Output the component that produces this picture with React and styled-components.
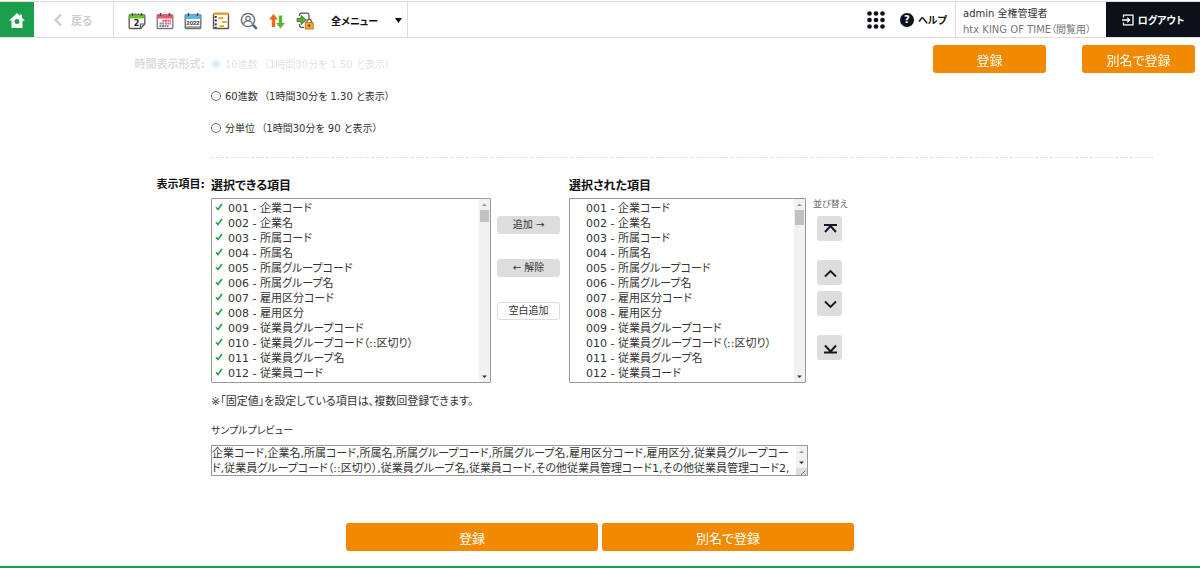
import React, { useState } from 'react';
import styled, { createGlobalStyle } from 'styled-components';

const baseItems = [
  '企業コード',
  '企業名',
  '所属コード',
  '所属名',
  '所属グループコード',
  '所属グループ名',
  '雇用区分コード',
  '雇用区分',
  '従業員グループコード',
  '従業員グループコード（::区切り）',
  '従業員グループ名',
  '従業員コード',
  'その他従業員管理コード1',
  'その他従業員管理コード2',
  '名前',
  '名前（フリガナ）',
];

const buildItems = (total) => Array.from({ length: total }, (_, i) => {
  const code = String(i + 1).padStart(3, '0');
  const name = baseItems[i] || `固定値${i + 1 - baseItems.length}`;
  return { code, label: `${code} - ${name}` };
});

const availableItems = buildItems(165);
const selectedItems = buildItems(132);

const formats = [
  { id: 'decimal', label: '10進数  （1時間30分を 1.50 と表示）', faded: true },
  { id: 'sexagesimal', label: '60進数  （1時間30分を 1.30 と表示）' },
  { id: 'minutes', label: '分単位  （1時間30分を 90 と表示）' },
];

const DayIcon = () => (
  <svg width="18" height="18" viewBox="0 0 18 18" fill="none">
    <path d="M2 3h14a.8.8 0 01.8.8V12l-4.300 4.500H2a.8.8 0 01-.8-.8V3.800A.8.8 0 012 3z" fill="#fff" stroke="#555" strokeWidth="1.300" />
    <path d="M1.500 3h15v3.500h-15z" fill="#6cc21e" />
    <path d="M4.500 1v3M13.500 1v3M7.500 1.500v1M10.500 1.500v1" stroke="#444" strokeWidth="1.400" />
    <path d="M16.500 12h-4v4.500" stroke="#555" strokeWidth="1.200" />
    <text x="8.500" y="14.300" textAnchor="middle" fontSize="8" fontWeight="700" fontFamily="DejaVu Sans, sans-serif" fill="#222">2</text>
  </svg>
);

const MonthIcon = () => (
  <svg width="18" height="18" viewBox="0 0 18 18" fill="none">
    <rect x="1.200" y="3" width="15.600" height="13.500" rx=".8" fill="#fff" stroke="#777" strokeWidth="1.300" />
    <path d="M1.500 2.500h15v4h-15z" fill="#f2536b" />
    <path d="M4.500 1v3M13.500 1v3" stroke="#444" strokeWidth="1.400" />
    <path d="M6.500 8.800h8.500M9 11.400h6" stroke="#f2536b" strokeWidth="2" strokeDasharray="2 .5" />
    <path d="M3.500 11.400H8M3.500 14h9" stroke="#888" strokeWidth="2" strokeDasharray="2 .5" />
  </svg>
);

const YearIcon = () => (
  <svg width="18" height="18" viewBox="0 0 18 18" fill="none">
    <rect x="1.200" y="3" width="15.600" height="13.500" rx=".8" fill="#fff" stroke="#666" strokeWidth="1.300" />
    <path d="M1.500 2.500h15v4.500h-15z" fill="#5bb4e5" />
    <path d="M4.500 1v3M13.500 1v3" stroke="#444" strokeWidth="1.400" />
    <path d="M2 15.200h14" stroke="#999" strokeWidth="2" />
    <text x="9" y="12.600" textAnchor="middle" fontSize="6" fontWeight="700" fontFamily="Liberation Sans, sans-serif" fill="#333">2022</text>
  </svg>
);

const ScheduleIcon = () => (
  <svg width="18" height="18" viewBox="0 0 18 18" fill="none">
    <rect x="1.500" y="1.500" width="15" height="15" rx=".8" fill="#fff" stroke="#555" strokeWidth="1.400" />
    <path d="M1 1.800h16" stroke="#f39a1b" strokeWidth="1.800" />
    <path d="M3.700 4v12" stroke="#333" strokeWidth="2" strokeDasharray="2 1.600" />
    <path d="M6.500 6h4.500M10 10h5M7.500 14h4.500" stroke="#f7a51d" strokeWidth="2.200" />
  </svg>
);

const SearchUserIcon = () => (
  <svg width="18" height="18" viewBox="0 0 18 18" fill="none">
    <circle cx="8" cy="8" r="6.600" fill="#fff" stroke="#777" strokeWidth="1.500" />
    <circle cx="8" cy="6.600" r="2.200" stroke="#777" strokeWidth="1.300" />
    <path d="M3.800 12c.5-2.400 2-3.200 4.200-3.200s3.700.8 4.200 3.200" stroke="#777" strokeWidth="1.300" />
    <path d="M12.800 12.800l4 4" stroke="#3f6f8f" strokeWidth="2.600" />
  </svg>
);

const SwapIcon = () => (
  <svg width="18" height="18" viewBox="0 0 18 18">
    <path d="M5.500 2L10 7.500H7.200V15H3.800V7.500H1z" fill="#f36a10" />
    <path d="M12.500 16.500L8 11h2.800V3.500h3.400V11H17z" fill="#5cb531" />
  </svg>
);

const LockIcon = () => (
  <svg width="18" height="18" viewBox="0 0 18 18" fill="none">
    <path d="M3.500 4V3a1.800 1.800 0 011.800-1.800h6A1.800 1.800 0 0113 3v4M3.500 12v1.500a1.800 1.800 0 001.800 1.800H8" stroke="#555" strokeWidth="1.300" />
    <path d="M1 6.500h4V3.500L10.500 8 5 12.500v-3H1z" fill="#58b22a" stroke="#3b6b26" strokeWidth=".8" />
    <path d="M11 11V9.500a2.200 2.200 0 014.400 0V11" stroke="#666" strokeWidth="1.300" />
    <rect x="9.200" y="10.600" width="8" height="6.400" fill="#f5a623" stroke="#a8711a" strokeWidth=".8" />
    <circle cx="13.200" cy="13.600" r="1.100" fill="#333" />
  </svg>
);

const tools = [
  { name: '日別データ', Icon: DayIcon },
  { name: '月別データ', Icon: MonthIcon },
  { name: '年別データ', Icon: YearIcon },
  { name: 'スケジュール', Icon: ScheduleIcon },
  { name: '従業員検索', Icon: SearchUserIcon },
  { name: 'データ入出力', Icon: SwapIcon },
  { name: 'ロック', Icon: LockIcon },
];

const sortButtons = [
  { name: '一番上へ', path: 'M7 9h13M8 16l5.500-6 5.500 6', gap: 0 },
  { name: '上へ', path: 'M8 16.500l5.500-5.500 5.500 5.500', gap: 19 },
  { name: '下へ', path: 'M8 10.500l5.500 5.500 5.500-5.500', gap: 6 },
  { name: '一番下へ', path: 'M7 17.500h13M8 10.500l5.500 6 5.500-6', gap: 19 },
];

const ScrollBar = ({ thumb }) => (
  <Track aria-hidden="true">
    <svg width="11" height="11" viewBox="0 0 11 11"><path d="M3 7h5L5.500 4.500z" fill="#999" /></svg>
    {thumb > 0 && <Thumb $size={thumb} />}
    <TrackEnd width="11" height="11" viewBox="0 0 11 11"><path d="M3 4.500h5L5.500 7z" fill="#333" /></TrackEnd>
  </Track>
);

const App = () => {
  const [format, setFormat] = useState('decimal');
  const [preview, setPreview] = useState(baseItems.join(','));

  return (
    <Page>
      <GlobalStyle />
      <Header>
        <HomeLink href="#home" aria-label="ホーム">
          <svg width="18" height="18" viewBox="0 0 18 18">
            <path d="M9 1L1 8.500h2.500V16h11V8.500H17L14 5.700V2.500h-2v1.300z" fill="#fff" />
            <circle cx="9" cy="9.500" r="2.500" fill="#1c9f4b" />
          </svg>
        </HomeLink>
        <BackButton type="button" disabled>
          <svg width="10" height="14" viewBox="0 0 10 14" fill="none">
            <path d="M8 1.500L2.500 7 8 12.500" stroke="#ccc" strokeWidth="2.400" />
          </svg>
          戻る
        </BackButton>
        <Toolbar>
          {tools.map(({ name, Icon }) => (
            <ToolButton key={name} type="button" aria-label={name}>
              <Icon />
            </ToolButton>
          ))}
          <MenuButton type="button">
            全メニュー
            <svg width="7" height="5" viewBox="0 0 7 5"><path d="M0 0h7L3.500 5z" fill="#111" /></svg>
          </MenuButton>
        </Toolbar>
        <HeaderRight>
          <ToolButton type="button" aria-label="アプリ一覧">
            <svg width="18" height="18" viewBox="0 0 18 18" fill="#0b1019">
              {[2.5, 9, 15.5].map((y) => [2.5, 9, 15.5].map((x) => (
                <circle key={`${x}-${y}`} cx={x} cy={y} r="2.300" />
              )))}
            </svg>
          </ToolButton>
          <HelpLink href="#help">
            <HelpMark>?</HelpMark>
            ヘルプ
          </HelpLink>
          <Account>
            <div>admin 全権管理者</div>
            <Company>htx KING OF TIME（閲覧用）</Company>
          </Account>
          <LogoutButton type="button">
            <svg width="12" height="12" viewBox="0 0 12 12" fill="none" stroke="#fff" strokeWidth="1.300">
              <path d="M1.500 3.500V1.200h9.500v9.600H1.500V8.500M0 6h7.500M5.200 3.600L7.600 6 5.200 8.400" />
            </svg>
            ログアウト
          </LogoutButton>
        </HeaderRight>
      </Header>

      <FloatingActions>
        <PrimaryButton type="button">登録</PrimaryButton>
        <PrimaryButton type="button">別名で登録</PrimaryButton>
      </FloatingActions>

      <Form>
        <FieldLabel $faded>時間表示形式:</FieldLabel>
        <FormatList>
          {formats.map(({ id, label, faded }) => (
            <RadioLabel key={id} $faded={faded}>
              <Radio
                type="radio"
                name="format"
                checked={format === id}
                onChange={() => setFormat(id)}
              />
              {label}
            </RadioLabel>
          ))}
        </FormatList>

        <FieldLabel>表示項目:</FieldLabel>
        <Picker>
          <PickerRow>
            <Available>
              <ListTitle htmlFor="available">選択できる項目</ListTitle>
              <ListFrame>
                <ListBox id="available" multiple size={12}>
                  {availableItems.map(({ code, label }) => (
                    <Item key={code} $checked>{label}</Item>
                  ))}
                </ListBox>
                <ScrollBar thumb={12} />
              </ListFrame>
            </Available>
            <MoveButtons>
              <MoveButton type="button">追加 →</MoveButton>
              <MoveButton type="button">← 解除</MoveButton>
              <MoveButton type="button" $plain>空白追加</MoveButton>
            </MoveButtons>
            <Selected>
              <ListTitle htmlFor="selected">選択された項目</ListTitle>
              <ListFrame>
                <ListBox id="selected" multiple size={12}>
                  {selectedItems.map(({ code, label }) => (
                    <Item key={code}>{label}</Item>
                  ))}
                </ListBox>
                <ScrollBar thumb={15} />
              </ListFrame>
            </Selected>
            <SortColumn>
              <SortTitle>並び替え</SortTitle>
              {sortButtons.map(({ name, path, gap }) => (
                <SortButton key={name} type="button" aria-label={name} $gap={gap}>
                  <svg width="25" height="25" viewBox="0 0 25 25" fill="none">
                    <path d={path} stroke="#111827" strokeWidth="1.900" />
                  </svg>
                </SortButton>
              ))}
            </SortColumn>
          </PickerRow>
          <Note>※「固定値」を設定している項目は、複数回登録できます。</Note>
          <PreviewLabel htmlFor="preview">サンプルプレビュー</PreviewLabel>
          <PreviewFrame>
            <Preview
              id="preview"
              rows={2}
              value={preview}
              onChange={(e) => setPreview(e.target.value)}
            />
            <PreviewSide>
              <ScrollBar />
              <Grip width="11" height="11" viewBox="0 0 11 11" aria-hidden="true">
                <path d="M2.500 9.500l7-7M6.500 9.500l3-3" stroke="#777" />
              </Grip>
            </PreviewSide>
          </PreviewFrame>
        </Picker>
      </Form>

      <BottomActions>
        <PrimaryButton type="button" $wide>登録</PrimaryButton>
        <PrimaryButton type="button" $wide>別名で登録</PrimaryButton>
      </BottomActions>
    </Page>
  );
};

const GlobalStyle = createGlobalStyle`
  * {
    box-sizing: border-box;
  }

  body {
    margin: 0;
    background: #fff;
  }

  body, button, select, textarea {
    font-family: "DejaVu Sans", "Noto Sans CJK JP", sans-serif;
    font-feature-settings: "palt";
    color: #333;
  }

  button {
    padding: 0;
    border: 0;
    background: none;
    cursor: pointer;
  }

  svg {
    display: block;
    flex: none;
  }
`;

const check = 'url("data:image/svg+xml,%3Csvg xmlns=\'http://www.w3.org/2000/svg\' width=\'8\' height=\'8\' viewBox=\'0 0 8 8\'%3E%3Cpath d=\'M1 4.300L3 6.500 7 1\' fill=\'none\' stroke=\'%2322a24c\' stroke-width=\'1.700\'/%3E%3C/svg%3E")';

const Page = styled.div`
  display: flex;
  flex-direction: column;
  min-height: 100vh;
  border-bottom: 2px solid #1c9f4b;
`;

const Header = styled.header`
  display: flex;
  height: 37px;
  margin-top: 1px;
  border: solid #ddd;
  border-width: 1px 0;
`;

const HomeLink = styled.a`
  display: flex;
  align-items: center;
  justify-content: center;
  width: 34px;
  padding-top: 2px;
  background: #1c9f4b;
`;

const BackButton = styled.button`
  display: flex;
  align-items: center;
  gap: 8px;
  width: 80px;
  padding-left: 19px;
  border-right: 1px solid #ddd;
  font-size: 11px;
  font-weight: 700;
  color: #ccc;
`;

const Toolbar = styled.nav`
  display: flex;
  align-items: center;
  gap: 10px;
  padding: 2px 5px 0 14px;
  border-right: 1px solid #ddd;
`;

const ToolButton = styled.button`
  width: 18px;
  height: 18px;
`;

const MenuButton = styled.button`
  display: flex;
  align-items: center;
  justify-content: space-between;
  width: 71px;
  margin-left: 7px;
  font-size: 10px;
  font-weight: 700;
  color: #111;
`;

const HeaderRight = styled.div`
  display: flex;
  align-items: center;
  margin-left: auto;
`;

const HelpLink = styled.a`
  display: flex;
  align-items: center;
  gap: 4px;
  width: 70px;
  padding-left: 15px;
  font-size: 10px;
  font-weight: 700;
  color: #111;
  text-decoration: none;
`;

const HelpMark = styled.span`
  width: 14px;
  border-radius: 50%;
  background: #0b1019;
  color: #fff;
  line-height: 14px;
  text-align: center;
`;

const Account = styled.div`
  width: 151px;
  padding: 4px 0 0 7px;
  border-left: 1px solid #ddd;
  font-size: 10px;
  line-height: 16px;
  white-space: nowrap;
`;

const Company = styled.div`
  color: #777;
`;

const LogoutButton = styled.button`
  display: flex;
  align-items: center;
  justify-content: center;
  gap: 4px;
  width: 94px;
  height: 35px;
  background: #0b1019;
  font-size: 10px;
  font-weight: 700;
  color: #fff;
`;

const PrimaryButton = styled.button`
  width: ${({ $wide }) => ($wide ? '252px' : '113px')};
  height: 28px;
  border-radius: 3px;
  background: #f28a00;
  font-size: 13px;
  color: #fff;
`;

const FloatingActions = styled.div`
  position: fixed;
  top: 45px;
  right: 5px;
  display: flex;
  gap: 36px;
`;

const Form = styled.form`
  display: grid;
  grid-template-columns: 158px 1fr;
  column-gap: 6px;
  margin: 0 47px;
`;

const FieldLabel = styled.div`
  padding-top: 18px;
  font-size: 11px;
  font-weight: 700;
  line-height: 18px;
  text-align: right;
  color: #111;
  opacity: ${({ $faded }) => ($faded ? 0.15 : 1)};
`;

const FormatList = styled.div`
  display: flex;
  flex-direction: column;
  gap: 14px;
  padding: 18px 0 19px;
  border-bottom: 1px dashed #ddd;
`;

const RadioLabel = styled.label`
  display: flex;
  align-items: center;
  gap: 4px;
  font-size: 10px;
  line-height: 18px;
  white-space: pre;
  opacity: ${({ $faded }) => ($faded ? 0.15 : 1)};
`;

const Radio = styled.input`
  width: 10px;
  height: 10px;
  margin: 0 0 3px;
`;

const Picker = styled.div`
  padding-top: 19px;
`;

const PickerRow = styled.div`
  display: flex;
`;

const Available = styled.div`
  width: 280px;
`;

const Selected = styled.div`
  width: 237px;
`;

const ListTitle = styled.label`
  display: block;
  height: 21px;
  font-size: 12px;
  font-weight: 700;
  line-height: 18px;
  color: #111;
`;

const ListFrame = styled.div`
  display: flex;
  height: 185px;
  border: 1px solid #999;
  border-radius: 1px;
`;

const ListBox = styled.select`
  flex: 1;
  min-width: 0;
  height: 100%;
  padding: 0;
  border: 0;
  font-size: 11px;
  outline: none;
  scrollbar-width: none;
`;

const Item = styled.option`
  height: 15px;
  min-height: 15px;
  padding: 0 0 0 16px;
  line-height: 15px;
  background: ${({ $checked }) => ($checked ? `${check} 3px center no-repeat` : 'none')};
`;

const Track = styled.div`
  display: flex;
  flex-direction: column;
  flex: 0 1 auto;
  width: 11px;
  background: #f1f1f1;
`;

const Thumb = styled.div`
  height: ${({ $size }) => $size}px;
  margin: 0 1px;
  background: #c1c1c1;
`;

const TrackEnd = styled.svg`
  margin-top: auto;
`;

const MoveButtons = styled.div`
  display: flex;
  flex-direction: column;
  gap: 25px;
  padding: 39px 9px 0 6px;
`;

const MoveButton = styled.button`
  width: 63px;
  height: 18px;
  border: 1px solid #ddd;
  border-radius: 3px;
  background: ${({ $plain }) => ($plain ? '#fff' : '#ddd')};
  font-size: 10px;
  line-height: 16px;
`;

const SortColumn = styled.div`
  display: flex;
  flex-direction: column;
  align-items: flex-start;
  padding: 19px 0 0 7px;
`;

const SortTitle = styled.div`
  height: 20px;
  font-size: 9px;
  line-height: 16px;
  color: #666;
`;

const SortButton = styled.button`
  width: 25px;
  height: 25px;
  margin: ${({ $gap }) => $gap}px 0 0 4px;
  border-radius: 3px;
  background: #ddd;
`;

const Note = styled.p`
  margin: 11px 0 0;
  font-size: 11px;
  line-height: 16px;
`;

const PreviewLabel = styled.label`
  display: block;
  margin: 13px 0 6px;
  font-size: 10px;
  line-height: 16px;
`;

const PreviewFrame = styled.div`
  display: flex;
  max-width: 597px;
  height: 31px;
  border: 1px solid #999;
`;

const Preview = styled.textarea`
  flex: 1;
  min-width: 0;
  padding: 0;
  border: 0;
  font-size: 11px;
  line-height: 15px;
  outline: none;
  resize: none;
  scrollbar-width: none;
`;

const PreviewSide = styled.div`
  display: flex;
  flex-direction: column;
  justify-content: space-between;
  overflow: hidden;
`;

const Grip = styled.svg`
  background: #ddd;
`;

const BottomActions = styled.div`
  display: flex;
  justify-content: center;
  gap: 4px;
  padding: 47px 0 15px;
`;

export default App;
